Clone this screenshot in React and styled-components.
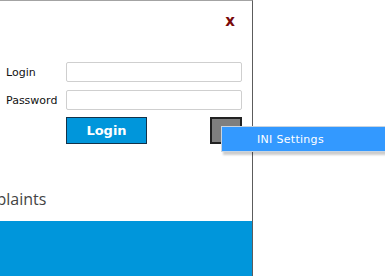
import React from "react";
import styled, { createGlobalStyle } from "styled-components";

const Global = createGlobalStyle`
  html, body { margin: 0; padding: 0; background: #fff; overflow: hidden; }
  * { box-sizing: border-box; }
`;

const Window = styled.div`
  width: 253px;
  height: 276px;
  border-top: 1px solid #a3a3a3;
  border-right: 1px solid #5c5c5c;
  display: flex;
  flex-direction: column;
  font-family: "DejaVu Sans", Verdana, sans-serif;
`;

const Header = styled.div`
  height: 61px;
  display: flex;
  justify-content: flex-end;
  align-items: flex-start;
  padding: 11px 17px 0 0;
`;

const Close = styled.span`
  color: #7a0a0a;
  font-family: "DejaVu Sans", Verdana, sans-serif;
  font-weight: bold;
  font-size: 15px;
  line-height: 18px;
  cursor: pointer;
`;

const Form = styled.div`
  display: grid;
  grid-template-columns: 60px 176px;
  row-gap: 8px;
  padding-left: 6px;
  align-items: center;
`;

const Label = styled.label`
  font-size: 11px;
  color: #111;
`;

const Input = styled.input`
  height: 20px;
  border: 1px solid #cfcfcf;
  border-radius: 2px;
  background: #fff;
  padding: 0 4px;
  outline: none;
`;

const ButtonRow = styled.div`
  margin-top: 7px;
  padding-left: 66px;
  width: 242px;
  display: flex;
  justify-content: space-between;
`;

const LoginButton = styled.button`
  width: 81px;
  height: 27px;
  background: #0096db;
  border: 1px solid #12324a;
  color: #fff;
  font-family: "DejaVu Sans", Verdana, sans-serif;
  font-weight: bold;
  font-size: 13px;
  padding: 0;
`;

const MoreWrap = styled.div`
  position: relative;
`;

const MoreButton = styled.button`
  width: 32px;
  height: 27px;
  background: #7f7f7f;
  border: 2px solid #222;
  color: #fff;
  font-size: 11px;
  padding: 0;
`;

const Menu = styled.div`
  position: absolute;
  left: 11px;
  top: 9px;
  width: 175px;
  height: 26px;
  background: #3399ff;
  border: 1px solid #c8d4e0;
  box-shadow: 2px 3px 2px rgba(0, 0, 0, 0.2);
  display: flex;
  align-items: center;
  padding-left: 35px;
  color: #fff;
  font-size: 11px;
  letter-spacing: 0.3px;
  white-space: nowrap;
`;

const Title = styled.div`
  margin-top: 44px;
  margin-left: -38px;
  font-family: "Open Sans", sans-serif;
  font-size: 16px;
  line-height: 22px;
  color: #444;
  white-space: nowrap;
`;

const Band = styled.div`
  margin-top: auto;
  height: 55px;
  background: #0096db;
`;

export default function App() {
  return (
    <>
      <Global />
      <Window>
        <Header>
          <Close>x</Close>
        </Header>
        <Form>
          <Label>Login</Label>
          <Input />
          <Label>Password</Label>
          <Input type="password" />
        </Form>
        <ButtonRow>
          <LoginButton>Login</LoginButton>
          <MoreWrap>
            <MoreButton>...</MoreButton>
            <Menu>INI Settings</Menu>
          </MoreWrap>
        </ButtonRow>
        <Title>Complaints</Title>
        <Band />
      </Window>
    </>
  );
}
